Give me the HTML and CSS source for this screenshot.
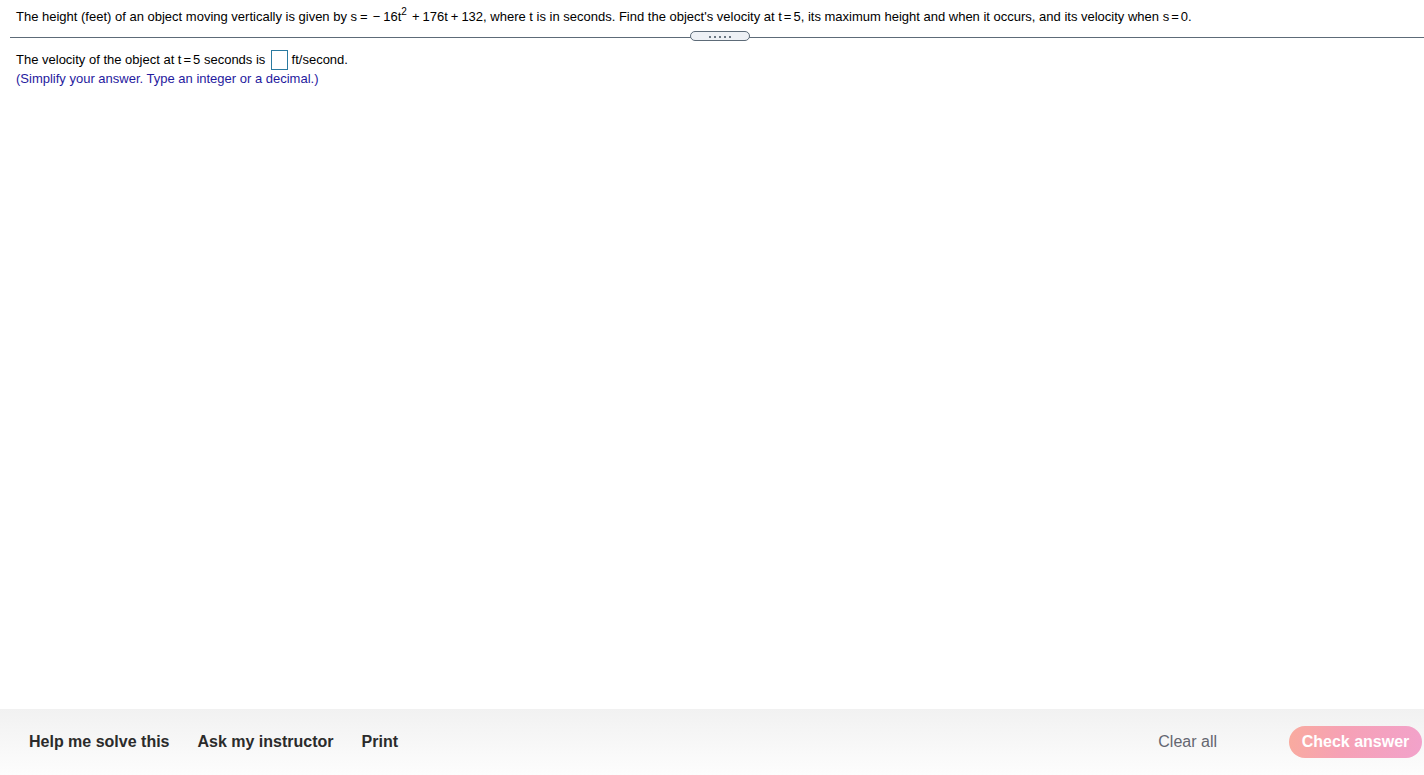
FILE: index.html
```html
<!DOCTYPE html>
<html>
<head>
<meta charset="utf-8">
<link rel="stylesheet" href="styles.css">
</head>
<body>
<div class="page">
  <div class="question">
    <p class="stem">The height (feet) of an object moving vertically is given by s<span class="eq">=</span><span class="minus">&minus;</span>16t<sup>2</sup><span class="pl">+</span>176t<span class="pl2">+</span>132, where t is in seconds. Find the object's velocity at t<span class="eq2">=</span>5, its maximum height and when it occurs, and its velocity when s<span class="eq2">=</span>0.</p>
  </div>
  <div class="divider">
    <div class="rule"></div>
    <div class="grip"><i></i><i></i><i></i><i></i><i></i></div>
  </div>
  <div class="answer">
    <p class="line">The velocity of the object at t<span class="eq2">=</span>5 seconds is <span class="box"></span> ft/second.</p>
    <p class="hint">(Simplify your answer. Type an integer or a decimal.)</p>
  </div>
</div>
<footer class="footer">
  <div class="links">
    <span class="link">Help me solve this</span>
    <span class="link">Ask my instructor</span>
    <span class="link">Print</span>
  </div>
  <div class="actions">
    <span class="clear">Clear all</span>
    <span class="check">Check answer</span>
  </div>
</footer>
</body>
</html>
```
FILE: styles.css
```css
html, body {
  margin: 0;
  padding: 0;
  height: 100%;
  background: #fff;
}
body {
  font-family: Arial, "Liberation Sans", Helvetica, sans-serif;
  font-size: 13px;
  color: #000;
  display: flex;
  flex-direction: column;
  overflow: hidden;
}
.page {
  flex: 1;
}
p { margin: 0; }
.question {
  padding: 9px 16px 0 16px;
  height: 23px;
}
.stem {
  line-height: 16px;
  white-space: nowrap;
}
.stem sup {
  font-size: 10px;
  line-height: 0;
  vertical-align: 6px;
}
.eq { margin: 0 5px 0 3px; }
.minus { margin-right: 3px; }
.pl { margin: 0 3px 0 5px; }
.pl2 { margin: 0 3px; }
.eq2 { margin: 0 2px; }
.divider {
  position: relative;
  margin-left: 10px;
  height: 12px;
  display: flex;
  align-items: flex-start;
  justify-content: center;
}
.rule {
  position: absolute;
  left: 0;
  right: 0;
  top: 5px;
  border-top: 1px solid #5d6b78;
}
.grip {
  position: relative;
  left: 3px;
  top: -1px;
  box-sizing: border-box;
  width: 60px;
  height: 10px;
  border: 1px solid #5d6b78;
  border-radius: 6px;
  background: #eef1f5;
  display: flex;
  align-items: center;
  justify-content: center;
  gap: 3px;
  padding-top: 2px;
}
.grip i {
  display: block;
  width: 2px;
  height: 2px;
  background: #6b7783;
}
.answer {
  padding: 6px 16px 0 16px;
}
.line {
  line-height: 20px;
  display: flex;
  align-items: center;
  white-space: pre;
}
.box {
  display: inline-block;
  width: 15px;
  height: 18px;
  border: 1px solid #2a7aa0;
  margin: 0 0 0 2px;
}
.hint {
  color: #1f1a9e;
  line-height: 18px;
}
.footer {
  height: 66px;
  flex: none;
  background: linear-gradient(#f1f1f1, #fdfdfd);
  display: flex;
  align-items: center;
  justify-content: space-between;
  padding: 0 2px 0 29px;
  font-family: Helvetica, Arial, "Liberation Sans", sans-serif;
}
.links {
  display: flex;
  gap: 28px;
}
.link {
  font-size: 16px;
  font-weight: bold;
  color: #2b2b2b;
}
.actions {
  display: flex;
  align-items: center;
  gap: 72px;
}
.clear {
  font-size: 16px;
  color: #646670;
}
.check {
  display: inline-flex;
  align-items: center;
  justify-content: center;
  width: 133px;
  height: 32px;
  border-radius: 16px;
  background: linear-gradient(100deg, #f9ab9e 0%, #f6a1b5 40%, #f2a2cb 100%);
  color: #fff;
  font-size: 16px;
  font-weight: bold;
}
```
